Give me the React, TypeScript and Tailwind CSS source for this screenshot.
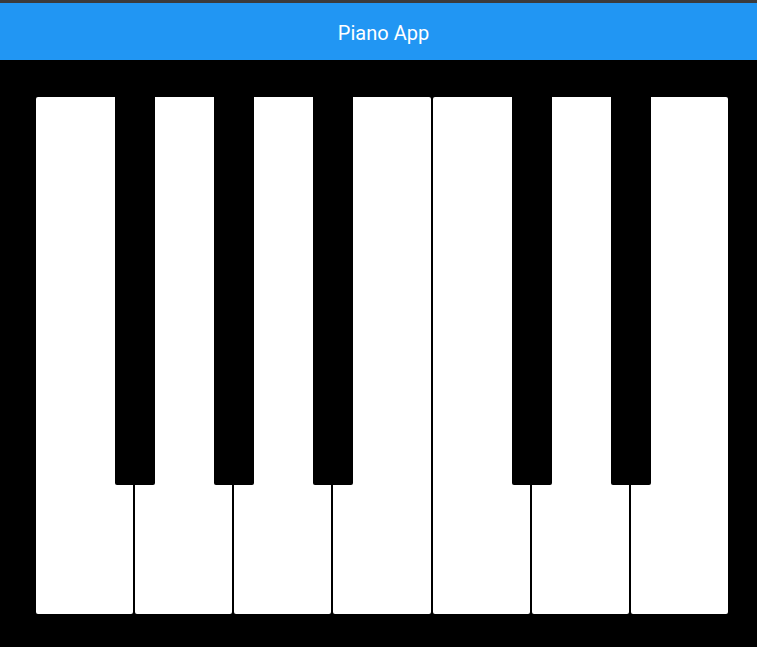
const WHITE_KEYS = [
  { id: 'c', sharp: true },
  { id: 'd', sharp: true },
  { id: 'e', sharp: true },
  { id: 'f', sharp: false },
  { id: 'g', sharp: true },
  { id: 'a', sharp: true },
  { id: 'b', sharp: false },
]

function PianoKey({ sharp }: { sharp: boolean }) {
  return (
    <div className="relative flex-1 mx-px bg-white rounded-[2px]">
      {sharp && (
        <div className="absolute z-10 top-0 -right-[22px] w-10 h-3/4 bg-black rounded-b-[2px]" />
      )}
    </div>
  )
}

export default function App() {
  return (
    <div className="w-[757px] h-[647px] flex flex-col bg-black font-['Roboto',sans-serif]">
      <div className="h-[3px] bg-[#3b3b3c]" />
      <header className="h-[57px] bg-[#2196f3] flex items-center justify-center pl-[10px] pt-[2px]">
        <h1 className="text-white text-[20px]">Piano App</h1>
      </header>
      <main className="flex-1 flex pt-[37px] pb-[33px] pl-[35px] pr-[28px]">
        {WHITE_KEYS.map((key) => (
          <PianoKey key={key.id} sharp={key.sharp} />
        ))}
      </main>
    </div>
  )
}
